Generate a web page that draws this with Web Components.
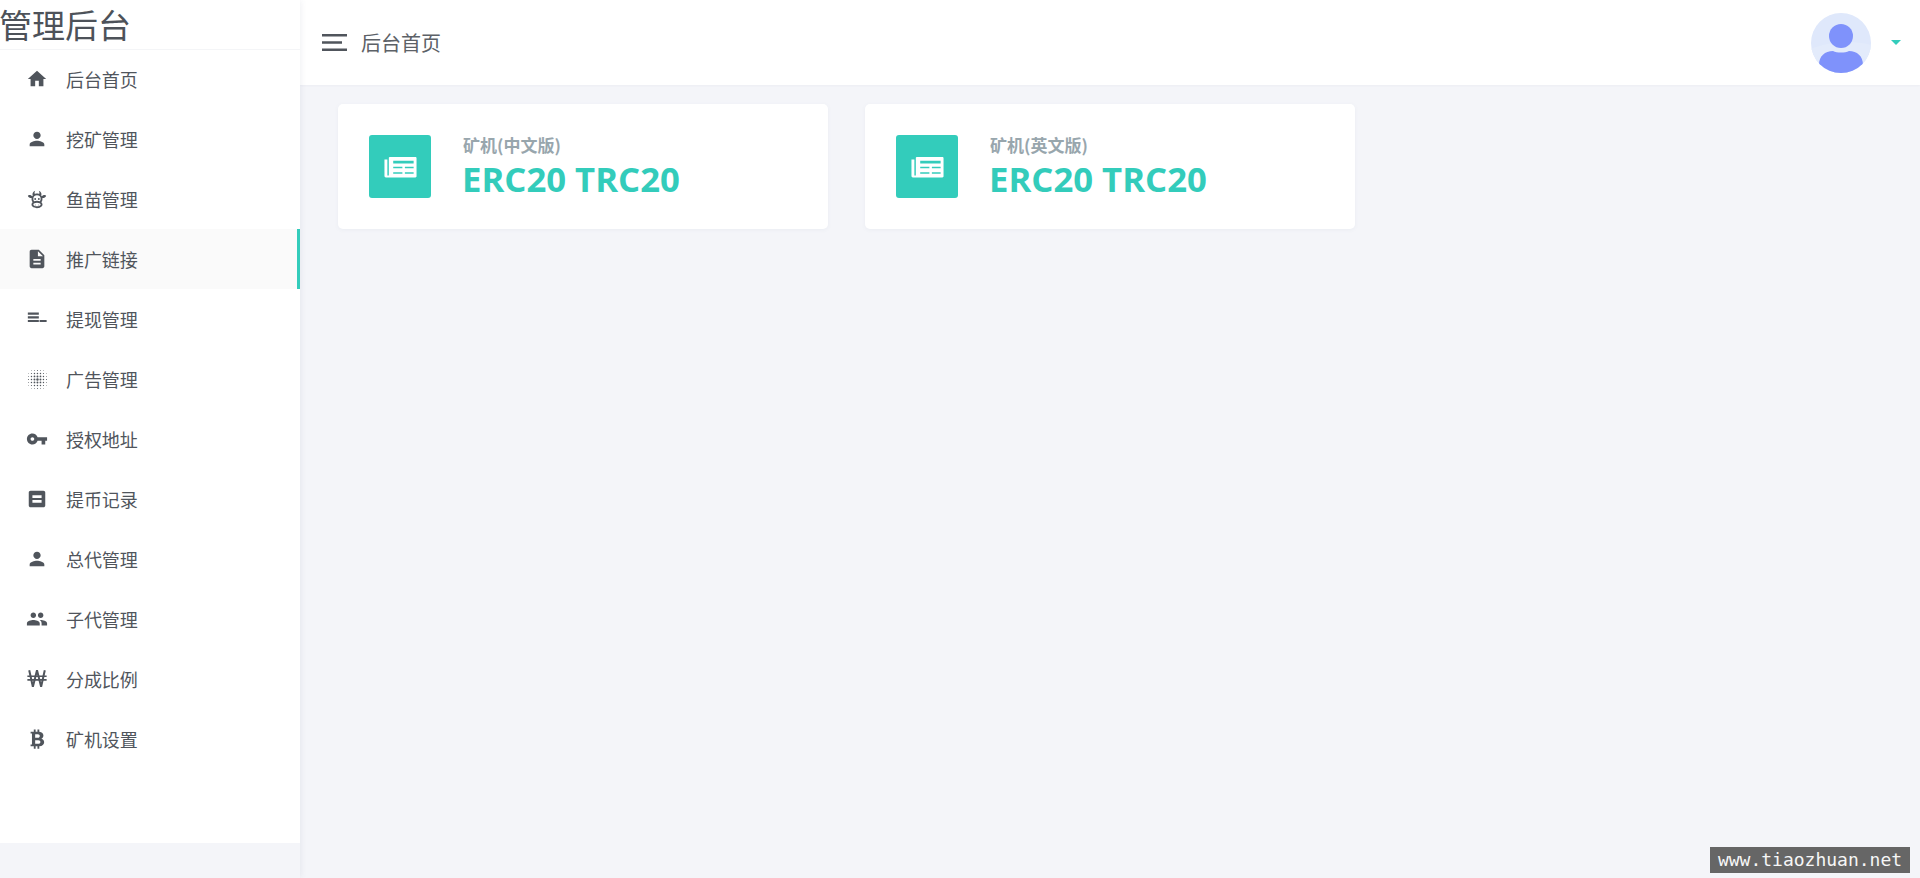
<!DOCTYPE html>
<html lang="zh">
<head>
<meta charset="utf-8">
<title>管理后台</title>
<style>
  html, body { margin: 0; height: 100%; background: #f4f5f9; overflow: hidden; }
  body { font-family: "Noto Sans CJK SC", "Noto Sans", sans-serif; }
</style>
</head>
<body>
<admin-shell>
  <admin-sidebar slot="sidebar" heading="管理后台">
    <nav-item icon="home">后台首页</nav-item>
    <nav-item icon="person">挖矿管理</nav-item>
    <nav-item icon="cow">鱼苗管理</nav-item>
    <nav-item icon="doc" active>推广链接</nav-item>
    <nav-item icon="lines">提现管理</nav-item>
    <nav-item icon="dots">广告管理</nav-item>
    <nav-item icon="key">授权地址</nav-item>
    <nav-item icon="box">提币记录</nav-item>
    <nav-item icon="person">总代管理</nav-item>
    <nav-item icon="people">子代管理</nav-item>
    <nav-item icon="won">分成比例</nav-item>
    <nav-item icon="btc">矿机设置</nav-item>
  </admin-sidebar>
  <top-bar slot="top" heading="后台首页"></top-bar>
  <stat-card label="矿机(中文版)" value="ERC20 TRC20"></stat-card>
  <stat-card label="矿机(英文版)" value="ERC20 TRC20"></stat-card>
</admin-shell>
<water-mark>www.tiaozhuan.net</water-mark>

<script>
const ICONS = {
  home: '<path d="M10 20v-6h4v6h5v-8h3L12 3 2 12h3v8z"/>',
  person: '<path d="M12 12c2.21 0 4-1.79 4-4s-1.79-4-4-4-4 1.79-4 4 1.79 4 4 4zm0 2c-2.67 0-8 1.34-8 4v2h16v-2c0-2.66-5.33-4-8-4z"/>',
  doc: '<path d="M14 2H6c-1.1 0-1.99.9-1.99 2L4 20c0 1.1.89 2 1.99 2H18c1.1 0 2-.9 2-2V8l-6-6zm2 16H8v-2h8v2zm0-4H8v-2h8v2zm-3-5V3.5L18.5 9H13z"/>',
  key: '<path d="M12.65 10C11.83 7.67 9.61 6 7 6c-3.31 0-6 2.69-6 6s2.69 6 6 6c2.61 0 4.83-1.67 5.65-4H17v4h4v-4h2v-4H12.65zM7 14c-1.1 0-2-.9-2-2s.9-2 2-2 2 .9 2 2-.9 2-2 2z"/>',
  box: '<path fill-rule="evenodd" d="M19 3H5c-1.1 0-2 .9-2 2v14c0 1.1.9 2 2 2h14c1.1 0 2-.9 2-2V5c0-1.1-.9-2-2-2zM7 8h10v3H7zm0 5h10v3H7z"/>',
  people: '<path d="M16 11c1.66 0 2.99-1.34 2.99-3S17.66 5 16 5c-1.66 0-3 1.34-3 3s1.34 3 3 3zm-8 0c1.66 0 2.99-1.34 2.99-3S9.66 5 8 5C6.34 5 5 6.34 5 8s1.34 3 3 3zm0 2c-2.33 0-7 1.17-7 3.5V19h14v-2.5c0-2.33-4.67-3.5-7-3.5zm8 0c-.29 0-.62.02-.97.05 1.16.84 1.97 1.97 1.97 3.45V19h6v-2.5c0-2.33-4.67-3.5-7-3.5z"/>',
  lines: '<path d="M2 5h12v2.400H2zM2 9h12v2.400H2zM2 13h12v2.400H2zM14.800 13h7.700v2.400h-7.700z"/>',
  won: '<g fill="none" stroke="currentColor"><path stroke-width="2.200" d="M3.500 2.500l4 18 4.500-18 4.500 18 4-18"/><path stroke-width="1.800" d="M1.500 9h21M1.500 13h21"/></g>',
  btc: '<path fill-rule="evenodd" d="M8.500 1.500h2v2.500h2V1.500h2V4c3 .4 4.500 2 4.500 4.200 0 1.700-.9 2.900-2.200 3.500 1.800.5 3 1.900 3 3.900 0 2.600-1.900 4.200-5.300 4.400v2.500h-2V20h-2v2.500h-2V20H5v-2h1.500V6H5V4h3.500zM10 6.800v3.900h3c1.300 0 2-.8 2-1.950s-.7-1.950-2-1.950zm0 6.500v4h3.500c1.400 0 2.200-.8 2.200-2s-.8-2-2.200-2z"/>',
  cow: '<path fill-rule="evenodd" d="M10.500 18a.5.5 0 1 1 0 1 .5.5 0 0 1 0-1zm3 0a.5.5 0 1 1 0 1 .5.5 0 0 1 0-1zM10 11a1 1 0 1 1 0 2 1 1 0 0 1 0-2zm4 0a1 1 0 1 1 0 2 1 1 0 0 1 0-2zm4 7c0 2.210-2.690 4-6 4s-6-1.790-6-4c0-.9.450-1.730 1.200-2.400C6.450 14.600 6 13.350 6 12l.120-1.220c-.540.150-1.190.150-1.720 0C3.380 10.500 1.840 9.350 2.070 8.550c.230-.8 2.140-.950 3.160-.650.590.170 1.220.600 1.590 1.060l.570-.810C6.790 7.050 7 4 10 3l-.090.140c-.280.440-1 1.830-.240 3.330C10.390 6.170 11.170 6 12 6s1.610.170 2.330.470c.760-1.500.040-2.890-.240-3.330L14 3c3 1 3.210 4.050 2.610 5.150l.570.810c.370-.460 1-.890 1.590-1.060 1.020-.300 2.930-.150 3.160.650.230.8-1.310 1.950-2.330 2.230-.530.150-1.180.150-1.720 0L18 12c0 1.350-.450 2.600-1.200 3.600.750.670 1.200 1.500 1.200 2.400zm-6-2c-2.210 0-4 .9-4 2s1.790 2 4 2 4-.9 4-2-1.790-2-4-2zm0-2c1.120 0 2.170.210 3.070.560.580-.690.930-1.560.930-2.560a4 4 0 0 0-8 0c0 1 .350 1.870.930 2.560.9-.350 1.950-.560 3.070-.560z"/>',
  news: '<path fill-rule="evenodd" d="M5 5.500h17.200c.5 0 .8.300.8.800v12.400c0 .5-.3.800-.8.800H2c-.6 0-1-.4-1-1V7.200h2v11h1V6.200c0-.4.400-.7 1-.7zM7 8v2h14V8zm0 4.200v1h6.300v-1zm8 0v1h6v-1zM7 16v1h6.300v-1zm8 0v1h6v-1z"/>'
};

function dotsIcon() {
  // halftone ball: dots shrink going away from the centre
  let out = "";
  for (let x = 0; x < 7; x++) {
    for (let y = 0; y < 7; y++) {
      const d = Math.hypot(x - 3, y - 3);
      const r = 1.3 - d * 0.24;
      if (r > 0.3) out += `<circle cx="${2.7 + x * 3.27}" cy="${2.7 + y * 3.27}" r="${r.toFixed(2)}"/>`;
    }
  }
  return out;
}
ICONS.dots = dotsIcon();

class AppIcon extends HTMLElement {
  connectedCallback() {
    const name = this.getAttribute("name");
    this.attachShadow({ mode: "open" }).innerHTML = `
      <style>
        :host { display: block; width: var(--icon-size, 22px); height: var(--icon-size, 22px); flex: none; }
        svg { display: block; width: 100%; height: 100%; fill: currentColor; }
      </style>
      <svg viewBox="0 0 24 24" aria-hidden="true">${ICONS[name] || ""}</svg>`;
  }
}
customElements.define("app-icon", AppIcon);

class AdminShell extends HTMLElement {
  constructor() {
    super();
    this.attachShadow({ mode: "open" }).innerHTML = `
      <style>
        :host { display: grid; grid-template-columns: 300px 1fr; grid-template-rows: 85px 1fr; height: 100vh; }
        .side { grid-row: 1 / 3; box-shadow: 1px 0 6px rgba(90, 100, 130, .09); position: relative; z-index: 2; }
        .cards { display: flex; gap: 37px; padding: 19px 38px; align-items: flex-start; }
      </style>
      <div class="side"><slot name="sidebar"></slot></div>
      <slot name="top"></slot>
      <div class="cards"><slot></slot></div>`;
  }
}
customElements.define("admin-shell", AdminShell);

class AdminSidebar extends HTMLElement {
  connectedCallback() {
    this.attachShadow({ mode: "open" }).innerHTML = `
      <style>
        :host { display: block; height: 843px; background: #fff; }
        .logo {
          height: 49px; box-shadow: 0 1px 0 #f4f5f7;
          font-size: 33px; line-height: 48px; color: #4d5259; white-space: nowrap; overflow: hidden;
          text-indent: -1px;
        }
      </style>
      <div class="logo">${this.getAttribute("heading")}</div>
      <nav><slot></slot></nav>`;
  }
}
customElements.define("admin-sidebar", AdminSidebar);

class NavItem extends HTMLElement {
  connectedCallback() {
    this.attachShadow({ mode: "open" }).innerHTML = `
      <style>
        :host {
          display: flex; align-items: center; gap: 18px; height: 60px; box-sizing: border-box;
          padding-left: 26px; font-size: 18px; color: #50555c;
        }
        :host([active]) { background: #fafafa; border-right: 3px solid #33ccbb; }
        span { line-height: 60px; letter-spacing: -.1px; }
      </style>
      <app-icon name="${this.getAttribute("icon")}"></app-icon>
      <span><slot></slot></span>`;
  }
}
customElements.define("nav-item", NavItem);

class TopBar extends HTMLElement {
  connectedCallback() {
    this.attachShadow({ mode: "open" }).innerHTML = `
      <style>
        :host {
          display: flex; align-items: center; height: 85px; box-sizing: border-box;
          background: #fff; padding: 0 19px 0 22px; box-shadow: 0 1px 2px rgba(90, 100, 130, .05);
        }
        .burger { display: block; width: 25px; height: 17px; margin-right: 14px; }
        .title { font-size: 20px; color: #5c6167; flex: 1; }
        .avatar { display: block; width: 60px; height: 60px; margin-right: 20px; }
        .caret { width: 0; height: 0; border: 5px solid transparent; border-top: 5px solid #33ccbb; border-bottom: 0; }
      </style>
      <svg class="burger" viewBox="0 0 25 17" aria-hidden="true">
        <path d="M0 0h25v2.500H0zM0 7.300h20v2.500H0zM0 14.500h25V17H0z" fill="#50555c"/>
      </svg>
      <div class="title">${this.getAttribute("heading")}</div>
      <svg class="avatar" viewBox="0 0 60 60" aria-hidden="true">
        <defs><clipPath id="round"><circle cx="30" cy="30" r="30"/></clipPath></defs>
        <g clip-path="url(#round)">
          <rect width="60" height="60" fill="#dfe8fb"/>
          <path d="M0 36c14-6 38-10 60-4v28H0z" fill="#e3ebfb"/>
          <circle cx="30" cy="23" r="12" fill="#7f92fb"/>
          <path d="M8 52c0-9 6-14 14-14 4 2 12 2 16 0 8 0 14 5 14 14v10H8z" fill="#7f92fb"/>
        </g>
      </svg>
      <div class="caret"></div>`;
  }
}
customElements.define("top-bar", TopBar);

class StatCard extends HTMLElement {
  connectedCallback() {
    this.attachShadow({ mode: "open" }).innerHTML = `
      <style>
        :host {
          display: flex; align-items: center; width: 490px; height: 125px; box-sizing: border-box;
          padding-left: 31px; background: #fff; border-radius: 5px;
          box-shadow: 0 1px 4px rgba(90, 100, 130, .06);
        }
        .badge {
          display: flex; align-items: center; justify-content: center; width: 62px; height: 63px;
          background: #33ccbb; border-radius: 3px; color: #fff; margin-right: 32px; --icon-size: 35px;
        }
        .label { font-size: 17px; line-height: 22px; font-weight: 700; color: #98a6ad; }
        .value {
          font-family: "Open Sans", "Noto Sans", sans-serif; font-size: 34.7px; line-height: 44px; font-weight: 700;
          color: #33ccbb; white-space: nowrap; margin-left: -1px; position: relative; top: 1px;
        }
      </style>
      <div class="badge"><app-icon name="news"></app-icon></div>
      <div>
        <div class="label">${this.getAttribute("label")}</div>
        <div class="value">${this.getAttribute("value")}</div>
      </div>`;
  }
}
customElements.define("stat-card", StatCard);

class WaterMark extends HTMLElement {
  constructor() {
    super();
    this.attachShadow({ mode: "open" }).innerHTML = `
      <style>
        :host {
          position: fixed; right: 10px; bottom: 5px; width: 200px; height: 26px; box-sizing: border-box;
          background: #666; color: #f6f6f6; text-align: center; z-index: 9;
          font: 18px/26px "DejaVu Sans Mono", "Liberation Mono", monospace;
        }
      </style>
      <slot></slot>`;
  }
}
customElements.define("water-mark", WaterMark);
</script>
</body>
</html>
